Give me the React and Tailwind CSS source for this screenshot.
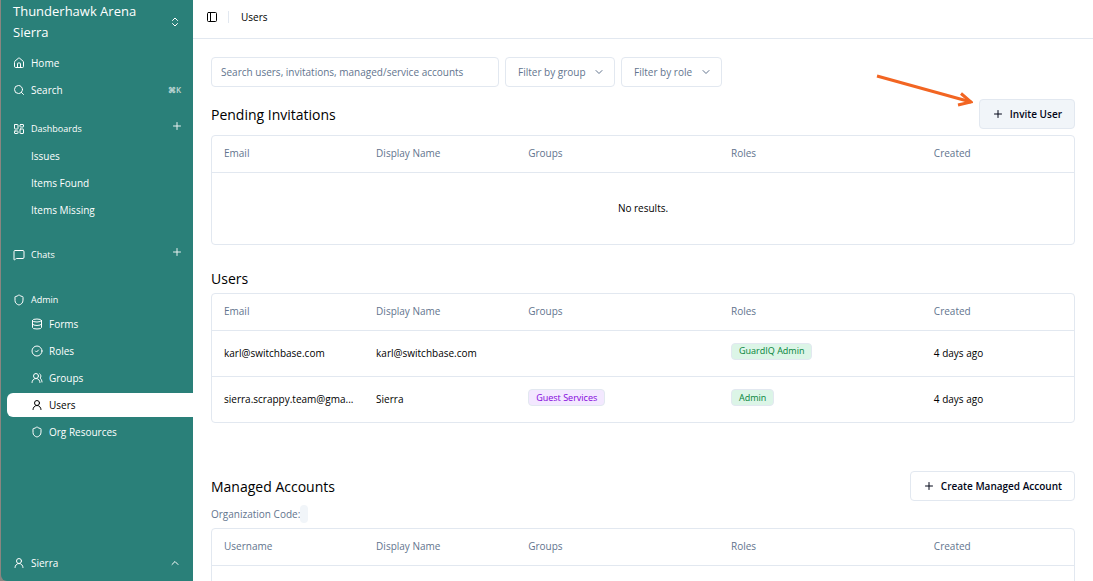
import { useState } from "react";
import {
  ChevronDown,
  ChevronsUpDown,
  ChevronUp,
  CircleCheck,
  Database,
  House,
  LayoutDashboard,
  MessageSquare,
  PanelLeft,
  Plus,
  Search,
  Shield,
  UserRound,
  UsersRound,
} from "lucide-react";

const dashboards = ["Issues", "Items Found", "Items Missing"];

const adminLinks = [
  { label: "Forms", icon: Database },
  { label: "Roles", icon: CircleCheck },
  { label: "Groups", icon: UsersRound },
  { label: "Users", icon: UserRound, active: true },
  { label: "Org Resources", icon: Shield },
];

const users = [
  {
    email: "karl@switchbase.com",
    name: "karl@switchbase.com",
    groups: [],
    roles: ["GuardIQ Admin"],
    created: "4 days ago",
  },
  {
    email: "sierra.scrappy.team@gma...",
    name: "Sierra",
    groups: ["Guest Services"],
    roles: ["Admin"],
    created: "4 days ago",
  },
];

// ====================================
// Sidebar
// ====================================

const SectionLabel = ({ icon: Icon, label, canAdd }) => (
  <div className="flex h-6 items-center pl-3 pr-2.5 text-[9px] font-medium">
    <Icon className="mr-1.5 size-3" />
    <h2>{label}</h2>

    {canAdd && (
      <button className="mb-1.5 ml-auto" aria-label={`Add to ${label}`}>
        <Plus className="size-3 opacity-90" />
      </button>
    )}
  </div>
);

const Sidebar = () => (
  <aside className="flex w-[193px] shrink-0 bg-[#8b8580] pl-px font-medium text-white">
    <div className="flex flex-1 flex-col rounded-bl-md bg-[#2a8079]">

      <button className="flex items-center justify-between pb-2 pl-3 pr-3 pt-px text-left text-[13px] font-normal leading-[21px]">
        <span>
          Thunderhawk Arena
          <br />
          Sierra
        </span>
        <ChevronsUpDown className="size-3" />
      </button>

      <nav className="flex flex-col">

        <div className="flex flex-col gap-[3px]">
          <a href="#home" className="flex h-6 items-center pl-3">
            <House className="mr-1.5 size-3" />
            Home
          </a>
          <a href="#search" className="flex h-6 items-center pl-3 pr-3">
            <Search className="mr-1.5 size-3" />
            Search
            <kbd className="ml-auto font-['Open_Sans',sans-serif] text-[8px] font-semibold opacity-70">⌘K</kbd>
          </a>
        </div>

        <div className="mt-[15px] flex flex-col gap-[3px]">
          <SectionLabel icon={LayoutDashboard} label="Dashboards" canAdd />
          {dashboards.map((item) => (
            <a key={item} href="#dashboard" className="flex h-6 items-center pl-[30px]">
              {item}
            </a>
          ))}
        </div>

        <div className="mt-[21px]">
          <SectionLabel icon={MessageSquare} label="Chats" canAdd />
        </div>

        <div className="mt-[21px]">
          <SectionLabel icon={Shield} label="Admin" />
          <div className="flex flex-col gap-[3px] pl-1.5">
            {adminLinks.map(({ label, icon: Icon, active }) => (
              <a
                key={label}
                href="#admin"
                className={`flex h-6 items-center rounded-l-md pl-6 ${
                  active ? "bg-white text-black" : ""
                }`}
              >
                <Icon className="mr-1.5 size-3" />
                {label}
              </a>
            ))}
          </div>
        </div>

      </nav>

      <button className="mb-1.5 mt-auto flex h-6 items-center pl-3 pr-3">
        <UserRound className="mr-1.5 size-3" />
        Sierra
        <ChevronUp className="ml-auto size-3" />
      </button>

    </div>
  </aside>
);

// ====================================
// Table
// ====================================

const Badge = ({ color, children }) => (
  <span
    className={`inline-flex h-[17px] items-center rounded border border-slate-200 px-[7px] text-[9px] font-medium ${
      color === "purple"
        ? "bg-purple-100 text-purple-700"
        : "bg-[#dcf5e7] text-green-700"
    }`}
  >
    {children}
  </span>
);

const AccountsTable = ({ label, firstColumn, rows = [], loading = false }) => (
  <div className="overflow-hidden rounded border border-slate-200">
    <table aria-label={label} className="w-full table-fixed text-left">

      <colgroup>
        <col className="w-[150px]" />
        <col className="w-[150px]" />
        <col className="w-[200px]" />
        <col className="w-[200px]" />
        <col className="w-[150px]" />
      </colgroup>

      <thead>
        <tr className="h-9 border-b border-slate-200 text-slate-500">
          <th className="px-3 font-medium">{firstColumn}</th>
          <th className="px-3 font-medium">Display Name</th>
          <th className="px-3 font-medium">Groups</th>
          <th className="px-3 font-medium">Roles</th>
          <th className="px-3 font-medium">Created</th>
        </tr>
      </thead>

      <tbody>
        {rows.length > 0 ? (
          rows.map((row) => (
            <tr key={row.email} className="h-[46px] border-b border-slate-200 last:border-b-0">
              <td className="whitespace-nowrap pl-3">{row.email}</td>
              <td className="whitespace-nowrap px-3">{row.name}</td>
              <td className="px-3 pb-1">
                {row.groups.map((group) => (
                  <Badge key={group} color="purple">{group}</Badge>
                ))}
              </td>
              <td className="px-3 pb-1">
                {row.roles.map((role) => (
                  <Badge key={role} color="green">{role}</Badge>
                ))}
              </td>
              <td className="px-3">{row.created}</td>
            </tr>
          ))
        ) : (
          <tr className="h-[72px]">
            <td colSpan="5" className="text-center">
              {!loading && "No results."}
            </td>
          </tr>
        )}
      </tbody>

    </table>
  </div>
);

const FilterSelect = ({ label }) => (
  <div className="relative text-slate-500">
    <select
      aria-label={label}
      className="h-[30px] appearance-none rounded border border-slate-200 bg-white pl-3 pr-7 font-medium outline-none"
    >
      <option>{label}</option>
    </select>
    <ChevronDown className="pointer-events-none absolute right-2.5 top-[9px] size-3" />
  </div>
);

const OutlineButton = ({ children, hovered }) => (
  <button
    className={`flex h-[30px] items-center gap-1.5 rounded border border-slate-200 px-3 font-semibold text-slate-950 ${
      hovered ? "bg-slate-100" : "bg-white"
    }`}
  >
    <Plus className="size-3" />
    {children}
  </button>
);

// ====================================
// Page
// ====================================

const App = () => {
  const [search, setSearch] = useState("");

  return (
    <div className="flex h-screen overflow-hidden bg-white font-['Open_Sans',sans-serif] text-[10px] text-black">

      <Sidebar />

      <div className="min-w-0 flex-1">

        {/* Header */}

        <header className="flex h-[39px] items-center border-b border-slate-200 px-[13px] pb-1">
          <button aria-label="Toggle sidebar">
            <PanelLeft className="size-3" />
          </button>
          <span className="ml-2.5 mr-3 h-3 w-px bg-slate-200" />
          <h1>Users</h1>
        </header>

        <main className="px-[18px] pt-[18px]">

          {/* Filters */}

          <div className="flex gap-1.5">
            <input
              type="text"
              aria-label="Search users"
              placeholder="Search users, invitations, managed/service accounts"
              value={search}
              onChange={(e) => setSearch(e.target.value)}
              className="h-[30px] w-72 rounded border border-slate-200 px-[9px] outline-none placeholder:text-slate-500"
            />
            <FilterSelect label="Filter by group" />
            <FilterSelect label="Filter by role" />
          </div>

          {/* Pending Invitations */}

          <section className="mt-3">
            <div className="mb-1.5 flex items-center justify-between">
              <h2 className="text-[14px]">Pending Invitations</h2>
              <div className="relative">
                <OutlineButton hovered>Invite User</OutlineButton>
                <svg
                  className="pointer-events-none absolute -top-7 right-full mr-1.5 h-9 w-[100px]"
                  viewBox="0 0 100 36"
                  fill="none"
                  stroke="#f26522"
                  strokeWidth="3"
                  aria-hidden="true"
                >
                  <path d="M4 5 L98 31" />
                  <path d="M88 22.500 L98 31 L85 34" strokeLinejoin="miter" />
                </svg>
              </div>
            </div>
            <AccountsTable label="Pending Invitations" firstColumn="Email" />
          </section>

          {/* Users */}

          <section className="mt-5">
            <h2 className="text-[14px] leading-7">Users</h2>
            <AccountsTable label="Users" firstColumn="Email" rows={users} />
          </section>

          {/* Managed Accounts */}

          <section className="mt-12">
            <div className="flex items-center justify-between">
              <h2 className="text-[14px]">Managed Accounts</h2>
              <OutlineButton>Create Managed Account</OutlineButton>
            </div>
            <p className="mb-[5px] mt-1 flex h-[18px] items-center text-slate-500">
              Organization Code:
              <code className="h-full w-2 rounded bg-slate-100" />
            </p>
            <AccountsTable label="Managed Accounts" firstColumn="Username" loading />
          </section>

        </main>

      </div>
    </div>
  );
};

export default App;
